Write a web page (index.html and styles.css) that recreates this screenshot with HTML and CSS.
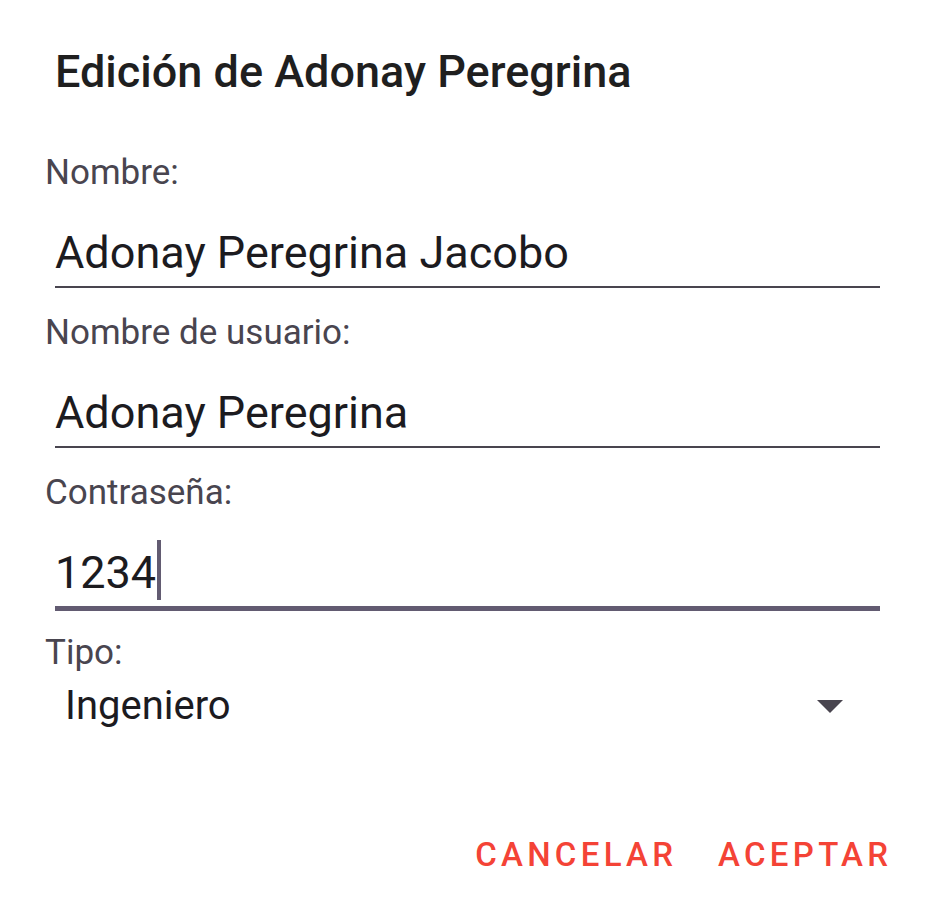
FILE: index.html
```html
<!DOCTYPE html>
<html lang="es">
<head>
<meta charset="utf-8">
<title>Edición</title>
<link rel="stylesheet" href="styles.css">
</head>
<body>
<div class="dialog">
  <h1 class="title">Edición de Adonay Peregrina</h1>
  <div class="field">
    <div class="label">Nombre:</div>
    <div class="input"><span class="value">Adonay Peregrina Jacobo</span></div>
  </div>
  <div class="field">
    <div class="label">Nombre de usuario:</div>
    <div class="input"><span class="value">Adonay Peregrina</span></div>
  </div>
  <div class="field">
    <div class="label">Contraseña:</div>
    <div class="input focused"><span class="value">1234</span><span class="cursor"></span></div>
  </div>
  <div class="field">
    <div class="label">Tipo:</div>
    <div class="spinner"><span class="option">Ingeniero</span><span class="arrow"></span></div>
  </div>
  <div class="actions">
    <button class="btn">CANCELAR</button>
    <button class="btn">ACEPTAR</button>
  </div>
</div>
</body>
</html>
```
FILE: styles.css
```css
html, body {
  margin: 0;
  padding: 0;
  background: #ffffff;
}
body {
  font-family: Roboto, "Noto Sans", sans-serif;
}
.dialog {
  width: 937px;
  height: 921px;
  box-sizing: border-box;
  padding: 42px 49px 0 45px;
  display: flex;
  flex-direction: column;
}
.title {
  margin: 0 0 51px 10px;
  font-size: 45px;
  font-weight: 500;
  color: #1f1f1f;
  line-height: 60px;
}
.field {
  display: flex;
  flex-direction: column;
  margin-bottom: 25px;
}
.label {
  font-size: 35px;
  color: #49454f;
  line-height: 40px;
}
.input {
  margin: 0 8px 0 10px;
  padding: 30px 0 3px 0;
  display: flex;
  align-items: flex-start;
  border-bottom: 2px solid #49454f;
}
.value {
  font-size: 45px;
  color: #1c1b1f;
  line-height: 60px;
}
.input.focused {
  border-bottom-color: #625b71;
  box-shadow: 0 3px 0 #625b71;
}
.cursor {
  width: 4px;
  height: 60px;
  background: #625b71;
  margin: -3px 0 0 1px;
}
.spinner {
  display: flex;
  align-items: center;
  justify-content: space-between;
  padding: 0 45px 0 20px;
  margin-top: 5px;
  height: 56px;
}
.option {
  font-size: 40px;
  line-height: 56px;
  color: #1c1b1f;
}
.arrow {
  width: 0;
  height: 0;
  border-left: 13px solid transparent;
  border-right: 13px solid transparent;
  border-top: 13px solid #49454f;
}
.field-last {
  margin-bottom: 0;
}
.actions {
  display: flex;
  justify-content: flex-end;
  gap: 45px;
  margin-top: 76px;
}
.btn {
  background: none;
  border: none;
  padding: 0;
  font-family: Roboto, sans-serif;
  font-size: 33px;
  line-height: 40px;
  font-weight: 500;
  letter-spacing: 4.3px;
  margin-right: -4.3px;
  color: #f44336;
}
```
